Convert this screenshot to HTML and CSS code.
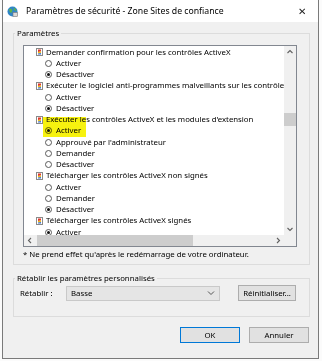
FILE: index.html
```html
<!DOCTYPE html>
<html lang="fr">
<head>
    <meta charset="UTF-8">
    <title>Paramètres de sécurité - Zone Sites de confiance</title>
    <link rel="stylesheet" href="styles.css">
</head>
<body>
    <div class="window">
        <div class="titlebar">
            <svg class="app-icon" width="11" height="11" viewBox="0 0 11 11">
                <circle cx="5.5" cy="5.5" r="5" fill="#2f86c8"/>
                <path d="M2 3.5 Q4 2 5 3.5 T4 7 Q2.5 6.5 2 3.5Z" fill="#5fb346"/>
                <path d="M6.5 1.5 Q9 2.5 9.5 5 Q8 5 7 3.5Z" fill="#5fb346"/>
                <rect x="6" y="6.5" width="4.5" height="4" fill="#d9d9d9" stroke="#777" stroke-width="0.6"/>
            </svg>
            <span class="title">Paramètres de sécurité - Zone Sites de confiance</span>
            <span class="close">&#x2715;</span>
        </div>
        <div class="content">
            <fieldset class="group settings">
                <legend>Paramètres</legend>
                <div class="listbox">
                    <div class="items">
                        <div class="mark"></div>
                        <div class="row head"><svg class="ico" width="7" height="8" viewBox="0 0 7 8"><rect x="0.5" y="0.5" width="6" height="7" fill="#fff" stroke="#8a8a8a"/><path d="M2 1.5 L5 1.5 L5 3.5 L2 4Z" fill="#e03a2f"/><path d="M2 4 L5 3.5 L5 5 L2 5.5Z" fill="#f2c418"/><path d="M2 5.5 L5 5 L5 6.5 L2 6.5Z" fill="#3a6fd0"/></svg>Demander confirmation pour les contrôles ActiveX</div>
                        <div class="row opt"><span class="radio"></span>Activer</div>
                        <div class="row opt"><span class="radio on"></span>Désactiver</div>
                        <div class="row head"><svg class="ico" width="7" height="8" viewBox="0 0 7 8"><rect x="0.5" y="0.5" width="6" height="7" fill="#fff" stroke="#8a8a8a"/><path d="M2 1.5 L5 1.5 L5 3.5 L2 4Z" fill="#e03a2f"/><path d="M2 4 L5 3.5 L5 5 L2 5.5Z" fill="#f2c418"/><path d="M2 5.5 L5 5 L5 6.5 L2 6.5Z" fill="#3a6fd0"/></svg>Exécuter le logiciel anti-programmes malveillants sur les contrôles ActiveX</div>
                        <div class="row opt"><span class="radio"></span>Activer</div>
                        <div class="row opt"><span class="radio on"></span>Désactiver</div>
                        <div class="row head"><svg class="ico" width="7" height="8" viewBox="0 0 7 8"><rect x="0.5" y="0.5" width="6" height="7" fill="#fff" stroke="#8a8a8a"/><path d="M2 1.5 L5 1.5 L5 3.5 L2 4Z" fill="#e03a2f"/><path d="M2 4 L5 3.5 L5 5 L2 5.5Z" fill="#f2c418"/><path d="M2 5.5 L5 5 L5 6.5 L2 6.5Z" fill="#3a6fd0"/></svg>Exécuter les contrôles ActiveX et les modules d'extension</div>
                        <div class="row opt"><span class="radio on"></span>Activer</div>
                        <div class="row opt"><span class="radio"></span>Approuvé par l'administrateur</div>
                        <div class="row opt"><span class="radio"></span>Demander</div>
                        <div class="row opt"><span class="radio"></span>Désactiver</div>
                        <div class="row head"><svg class="ico" width="7" height="8" viewBox="0 0 7 8"><rect x="0.5" y="0.5" width="6" height="7" fill="#fff" stroke="#8a8a8a"/><path d="M2 1.5 L5 1.5 L5 3.5 L2 4Z" fill="#e03a2f"/><path d="M2 4 L5 3.5 L5 5 L2 5.5Z" fill="#f2c418"/><path d="M2 5.5 L5 5 L5 6.5 L2 6.5Z" fill="#3a6fd0"/></svg>Télécharger les contrôles ActiveX non signés</div>
                        <div class="row opt"><span class="radio"></span>Activer</div>
                        <div class="row opt"><span class="radio"></span>Demander</div>
                        <div class="row opt"><span class="radio on"></span>Désactiver</div>
                        <div class="row head"><svg class="ico" width="7" height="8" viewBox="0 0 7 8"><rect x="0.5" y="0.5" width="6" height="7" fill="#fff" stroke="#8a8a8a"/><path d="M2 1.5 L5 1.5 L5 3.5 L2 4Z" fill="#e03a2f"/><path d="M2 4 L5 3.5 L5 5 L2 5.5Z" fill="#f2c418"/><path d="M2 5.5 L5 5 L5 6.5 L2 6.5Z" fill="#3a6fd0"/></svg>Télécharger les contrôles ActiveX signés</div>
                        <div class="row opt"><span class="radio on"></span>Activer</div>
                        <div class="row opt"><span class="radio"></span>Demander</div>
                    </div>
                    <div class="vscroll">
                        <svg class="arrow" width="12" height="12" viewBox="0 0 12 12"><polyline points="3.5,7 6,4.5 8.5,7" fill="none" stroke="#606060" stroke-width="1.1"/></svg>
                        <div class="vtrack"><div class="vthumb"></div></div>
                        <svg class="arrow" width="12" height="12" viewBox="0 0 12 12"><polyline points="3.5,5 6,7.5 8.5,5" fill="none" stroke="#606060" stroke-width="1.1"/></svg>
                    </div>
                    <div class="hscroll">
                        <svg class="arrow" width="12" height="11" viewBox="0 0 12 11"><polyline points="7,3 4.5,5.5 7,8" fill="none" stroke="#606060" stroke-width="1.1"/></svg>
                        <div class="htrack"><div class="hthumb"></div></div>
                        <svg class="arrow" width="12" height="11" viewBox="0 0 12 11"><polyline points="5,3 7.5,5.5 5,8" fill="none" stroke="#606060" stroke-width="1.1"/></svg>
                    </div>
                    <div class="corner"></div>
                </div>
                <p class="note">* Ne prend effet qu'après le redémarrage de votre ordinateur.</p>
            </fieldset>

            <fieldset class="group reset">
                <legend>Rétablir les paramètres personnalisés</legend>
                <div class="reset-row">
                    <span class="reset-label">Rétablir :</span>
                    <div class="select">
                        <span>Basse</span>
                        <svg width="8" height="6" viewBox="0 0 8 6"><polyline points="1,1.5 4,4.5 7,1.5" fill="none" stroke="#555" stroke-width="1"/></svg>
                    </div>
                    <button class="btn reset-btn">Réinitialiser...</button>
                </div>
            </fieldset>

            <div class="actions">
                <button class="btn ok">OK</button>
                <button class="btn">Annuler</button>
            </div>
        </div>
    </div>
</body>
</html>
```

FILE: styles.css
```css
body {
    margin: 0;
    background: #fbfbfb;
    font-family: "Noto Sans", "Open Sans", sans-serif;
    font-size: 7.8px;
    color: #000;
}
.window {
    margin-left: 2px;
    width: 317px;
    height: 359px;
    box-sizing: border-box;
    border: 1px solid #7a7a7a;
    border-top: none;
    display: flex;
    flex-direction: column;
    background: #f0f0f0;
}
.titlebar {
    height: 22px;
    flex: none;
    background: #fff;
    display: flex;
    align-items: center;
    padding-left: 4px;
}
.app-icon {
    margin-top: 1px;
}
.title {
    margin-left: 8px;
    font-size: 8.7px;
    flex: 1;
}
.close {
    font-size: 10px;
    width: 20px;
    color: #222;
}
.content {
    flex: 1;
    display: flex;
    flex-direction: column;
}
.group {
    border: 1px solid #dcdcdc;
    margin: 0 8px 0 10px;
    padding: 0;
    min-width: 0;
}
.group legend {
    margin-left: 1px;
    padding: 0 2px;
    line-height: 12px;
}
.settings {
    margin-top: 5px;
    padding: 6px 0 4px 0;
}
.listbox {
    margin-left: 9px;
    width: 274px;
    height: 202px;
    box-sizing: border-box;
    border: 1px solid #828790;
    background: #fff;
    display: grid;
    grid-template-columns: 1fr 12px;
    grid-template-rows: 1fr 11px;
}
.items {
    position: relative;
    overflow: hidden;
    white-space: nowrap;
    padding-top: 0.5px;
}
.row {
    height: 11.25px;
    line-height: 11.25px;
    display: flex;
    align-items: center;
}
.head {
    padding-left: 12px;
}
.ico {
    margin-right: 3px;
    flex: none;
}
.opt {
    padding-left: 21px;
}
.radio {
    width: 7px;
    height: 7px;
    box-sizing: border-box;
    border: 1px solid #5a5a5a;
    border-radius: 50%;
    margin-right: 4px;
    flex: none;
    display: flex;
    align-items: center;
    justify-content: center;
    background: #fff;
}
.radio.on::after {
    content: "";
    width: 3px;
    height: 3px;
    border-radius: 50%;
    background: #111;
}
.mark {
    position: absolute;
    left: 19px;
    top: 71px;
    width: 43px;
    height: 20px;
    background: #f7f20f;
    mix-blend-mode: multiply;
    z-index: 1;
}
.vscroll {
    background: #f0f0f0;
    display: flex;
    flex-direction: column;
}
.vtrack {
    flex: 1;
}
.vthumb {
    margin-top: 55px;
    height: 13px;
    background: #cdcdcd;
}
.hscroll {
    background: #f0f0f0;
    display: flex;
}
.htrack {
    flex: 1;
    display: flex;
    align-items: stretch;
}
.hthumb {
    margin-left: 1px;
    width: 156px;
    background: #cdcdcd;
}
.arrow {
    flex: none;
}
.corner {
    background: #f0f0f0;
}
.note {
    margin: 2px 0 0 9px;
    line-height: 11px;
}
.reset {
    margin-top: 7px;
    padding: 1px 0 15px 0;
}
.reset-row {
    display: flex;
    align-items: center;
    height: 16px;
    padding-left: 6px;
}
.reset-label {
    width: 46px;
}
.select {
    width: 154px;
    height: 15px;
    box-sizing: border-box;
    border: 1px solid #c9c9c9;
    background: #e5e5e5;
    display: flex;
    align-items: center;
    justify-content: space-between;
    padding: 0 4px 0 4px;
}
.btn {
    font-family: inherit;
    font-size: 7.8px;
    background: #e1e1e1;
    border: 1px solid #adadad;
    padding: 0;
    color: #000;
    height: 16px;
    width: 60px;
}
.reset-btn {
    margin-left: 18px;
    width: 58px;
}
.actions {
    margin: 10px 9px 0 0;
    display: flex;
    justify-content: flex-end;
    gap: 9px;
}
.ok {
    border-color: #0078d7;
}
```
